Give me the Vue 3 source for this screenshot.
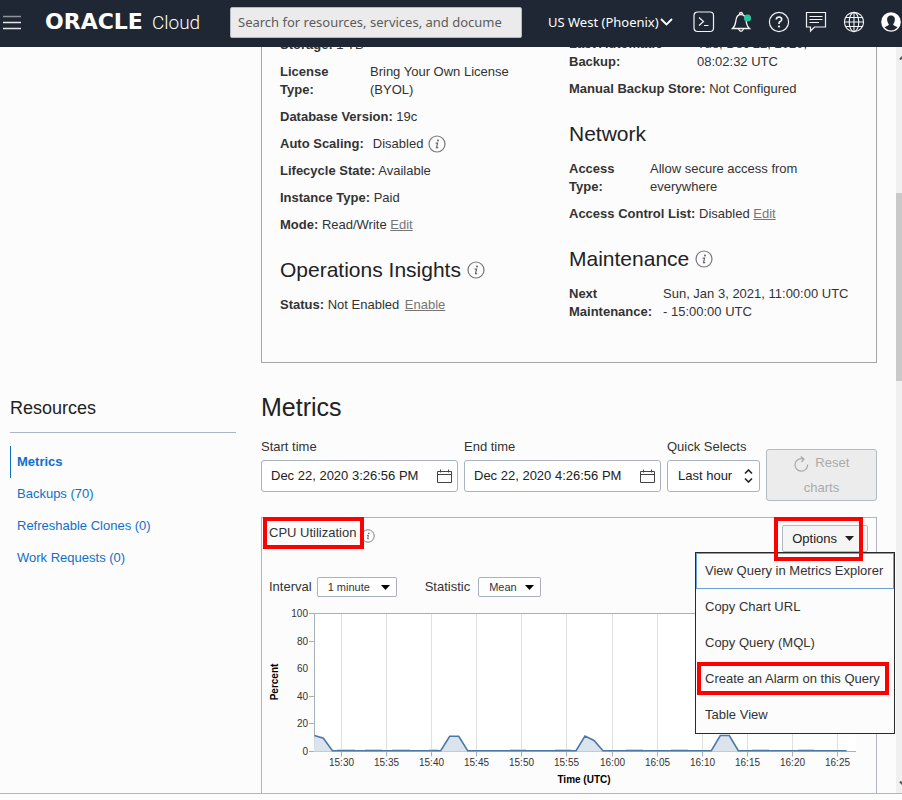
<script setup>
import { ref, h } from 'vue'

const startTime = ref('Dec 22, 2020 3:26:56 PM')
const endTime = ref('Dec 22, 2020 4:26:56 PM')
const quick = ref('Last hour')
const interval = ref('1 minute')
const statistic = ref('Mean')

const resources = ['Metrics', 'Backups (70)', 'Refreshable Clones (0)', 'Work Requests (0)']
const menuItems = [
  'View Query in Metrics Explorer',
  'Copy Chart URL',
  'Copy Query (MQL)',
  'Create an Alarm on this Query',
  'Table View',
]

const InfoIcon = () =>
  h('svg', { class: 'info', viewBox: '0 0 18 18', 'aria-hidden': 'true' }, [
    h('circle', { cx: 9, cy: 9, r: 8, fill: 'none', stroke: '#777', 'stroke-width': 1.2 }),
    h('circle', { cx: 10, cy: 5.6, r: 1, fill: '#666' }),
    h('path', { d: 'M7.6 8.2H9.6L8.5 12.6H10.2', fill: 'none', stroke: '#666', 'stroke-width': 1.2 }),
  ])

// Plot geometry, in chart units
const left = 52
const right = 594
const top = 13.5
const bottom = 151.5
const xAt = (minute) => left + 0.4 + minute * 9.02
const yAt = (value) => bottom - value * 1.38

const yTicks = [0, 20, 40, 60, 80, 100]
const xTicks = Array.from({ length: 12 }, (_, i) => {
  const total = 15 * 60 + 30 + i * 5
  return {
    x: Math.floor(xAt(3 + i * 5)) + 0.5,
    label: Math.floor(total / 60) + ':' + String(total % 60).padStart(2, '0'),
  }
})
const samples = [
  [0, 11.6], [1, 9.6], [2, 0.6], [14, 0.6], [15, 11], [16, 11], [17, 0.6], [29, 0.6],
  [30, 11.2], [31, 8], [32, 0.6], [44, 0.6], [45, 11.6], [46, 11.6], [47, 0.6], [59, 0.6],
]
const points = samples.map(([m, v]) => xAt(m).toFixed(1) + ',' + yAt(v).toFixed(1)).join(' ')
const area = `${left},${bottom} ${points} ${xAt(59)},${bottom}`
const ripples = [[75, 18], [103, 17], [130, 18], [167, 9], [248, 16], [293, 16], [364, 17], [409, 17], [490, 17], [536, 16]]
</script>

<template>
  <div class="page">
    <header class="topbar">
      <button class="icon-btn burger" type="button" aria-label="Navigation menu">
        <svg viewBox="0 0 18 15" width="18" height="15">
          <path d="M0 1.5H18" stroke="#8f959c" stroke-width="1.5" />
          <path d="M0 7.5H18M0 13.5H18" stroke="#e4e6e8" stroke-width="1.3" />
        </svg>
      </button>
      <a class="logo" href="#"><strong>ORACLE</strong><span>Cloud</span></a>
      <input class="search" type="text" aria-label="Search" placeholder="Search for resources, services, and docume" />
      <button class="region" type="button">
        US West (Phoenix)
        <svg viewBox="0 0 13 8" width="13" height="8"><path d="M1 1L6.500 6.500L12 1" fill="none" stroke="#fff" stroke-width="1.8" /></svg>
      </button>
      <nav class="tools" aria-label="Tools">
        <button class="icon-btn" type="button" aria-label="Cloud Shell">
          <svg viewBox="0 0 22 22" width="22" height="22" fill="none" stroke="#f2f3f4" stroke-width="1.2">
            <rect x="1" y="1" width="19.500" height="19.500" rx="3.500" />
            <path d="M6 6.500L10.500 10.500L6 14.500M11 14.500H15.500" />
          </svg>
        </button>
        <button class="icon-btn" type="button" aria-label="Announcements">
          <svg viewBox="0 0 22 22" width="22" height="22" fill="none" stroke="#f2f3f4" stroke-width="1.3">
            <path d="M2.500 17.500H19.500C16.500 15 16.500 12.500 16 9C15.500 5.500 13.500 3.500 11 3.500S6.500 5.500 6 9C5.500 12.500 5.500 15 2.500 17.500Z" />
            <path d="M9.500 3.500V2.500Q11 .5 12.500 2.500V3.500M8.500 18Q11 22.500 13.500 18" />
            <circle cx="17.500" cy="7" r="3.600" fill="#2bc4a0" stroke="none" />
          </svg>
        </button>
        <button class="icon-btn" type="button" aria-label="Help">
          <svg viewBox="0 0 22 22" width="22" height="22" fill="none" stroke="#f2f3f4" stroke-width="1.2">
            <circle cx="11" cy="11" r="9.600" />
            <path d="M8.300 8.500Q8.500 6 11 6Q13.800 6.200 13.700 8.500Q13.500 10 11.800 10.800Q11 11.300 11 13" stroke-width="1.700" />
            <circle cx="11" cy="15.500" r="1.100" fill="#fff" stroke="none" />
          </svg>
        </button>
        <button class="icon-btn" type="button" aria-label="Feedback">
          <svg viewBox="0 0 22 22" width="22" height="22" fill="none" stroke="#f2f3f4" stroke-width="1.200">
            <path d="M1.500 1.500H20.500V16H9.500L5.500 20V16H1.500Z" />
            <path d="M4.500 5.500H17.500M4.500 8.500H17.500M4.500 11.500H14" />
          </svg>
        </button>
        <button class="icon-btn" type="button" aria-label="Language">
          <svg viewBox="0 0 22 22" width="22" height="22" fill="none" stroke="#f2f3f4" stroke-width="1.100">
            <circle cx="11" cy="11" r="9.600" />
            <ellipse cx="11" cy="11" rx="4.800" ry="9.600" />
            <path d="M11 1.400V20.600M2.800 6.500H19.200M1.400 11H20.600M2.800 15.500H19.200" />
          </svg>
        </button>
        <button class="icon-btn" type="button" aria-label="Profile">
          <svg viewBox="0 0 22 22" width="22" height="22">
            <circle cx="11" cy="11" r="9.800" fill="#fff" />
            <path d="M11 4.500C7.800 4.500 6.800 7 7.200 9.500C7.500 11.500 8.200 12.500 9 13.300C8.500 15 6 15 4.500 16.500Q7.500 19.500 11 19.500T17.500 16.500C16 15 13.500 15 13 13.300C13.800 12.500 14.500 11.500 14.800 9.500C15.200 7 14.200 4.500 11 4.500Z" fill="#1e2733" />
          </svg>
        </button>
      </nav>
    </header>

    <div class="viewport">
      <main class="content">
        <section class="details" aria-label="Database details">
          <div class="col first">
            <p><b>Storage:</b> 1 TB</p>
            <div class="pair narrow"><b>License Type:</b><span>Bring Your Own License (BYOL)</span></div>
            <p><b>Database Version:</b> 19c</p>
            <p class="inline"><b>Auto Scaling:</b><span class="spaced">Disabled</span><InfoIcon /></p>
            <p><b>Lifecycle State:</b> Available</p>
            <p><b>Instance Type:</b> Paid</p>
            <p><b>Mode:</b> Read/Write <a href="#">Edit</a></p>
            <h2>Operations Insights <InfoIcon /></h2>
            <p><b>Status:</b> Not Enabled <a class="gap" href="#">Enable</a></p>
          </div>
          <div class="col">
            <div class="pair wide"><b>Last Automatic Backup:</b><span>Tue, Dec 22, 2020, 08:02:32 UTC</span></div>
            <p><b>Manual Backup Store:</b> Not Configured</p>
            <h2>Network</h2>
            <div class="pair slim"><b>Access Type:</b><span>Allow secure access from everywhere</span></div>
            <p><b>Access Control List:</b> Disabled <a href="#">Edit</a></p>
            <h2>Maintenance <InfoIcon /></h2>
            <div class="pair mid"><b>Next Maintenance:</b><span>Sun, Jan 3, 2021, 11:00:00 UTC - 15:00:00 UTC</span></div>
          </div>
        </section>

        <aside class="resources">
          <h2>Resources</h2>
          <nav aria-label="Resources">
            <a v-for="(item, i) in resources" :key="item" href="#" :class="{ active: i === 0 }">{{ item }}</a>
          </nav>
        </aside>

        <section class="metrics">
          <h1>Metrics</h1>
          <div class="filters">
            <div class="field">
              <label for="start">Start time</label>
              <div class="box">
                <input id="start" v-model="startTime" type="text" />
                <svg viewBox="0 0 15 15" width="15" height="15" fill="none" stroke="#444"><path d="M.5 2.500H14.500V13.500H.5ZM.5 5.500H14.500M3.500 .5V3.500M11.500 .5V3.500" /></svg>
              </div>
            </div>
            <div class="field">
              <label for="end">End time</label>
              <div class="box">
                <input id="end" v-model="endTime" type="text" />
                <svg viewBox="0 0 15 15" width="15" height="15" fill="none" stroke="#444"><path d="M.5 2.500H14.500V13.500H.5ZM.5 5.500H14.500M3.500 .5V3.500M11.500 .5V3.500" /></svg>
              </div>
            </div>
            <div class="field">
              <label for="quick">Quick Selects</label>
              <div class="box quick">
                <select id="quick" v-model="quick"><option>Last hour</option></select>
                <svg viewBox="0 0 9 14" width="9" height="14" fill="none" stroke="#222" stroke-width="1.600"><path d="M1 4.500L4.500 1L8 4.500M1 9.500L4.500 13L8 9.500" /></svg>
              </div>
            </div>
            <button class="reset" type="button" disabled>
              <svg viewBox="0 0 15 16" width="15" height="16" fill="none" stroke="#aaa" stroke-width="1.200"><path d="M13.600 8.500A6.300 6.300 0 1 1 9.500 3M6.800 .6L10 3L7.500 6" /></svg>
              Reset charts
            </button>
          </div>

          <article class="chart-card">
            <div class="chart-head">
              <h3>CPU Utilization</h3>
              <InfoIcon />
              <div class="options">
                <button class="options-btn" type="button" aria-haspopup="menu" aria-expanded="true">
                  Options
                  <svg viewBox="0 0 9 5" width="9" height="5"><path d="M0 0H9L4.500 5Z" fill="#222" /></svg>
                </button>
                <div class="menu" role="menu">
                  <button
                    v-for="(item, i) in menuItems"
                    :key="item"
                    type="button"
                    role="menuitem"
                    :class="{ focused: i === 0, marked: i === 3 }"
                  >{{ item }}</button>
                </div>
                <div class="mark"></div>
              </div>
            </div>

            <div class="controls">
              <label for="interval">Interval</label>
              <div class="mini interval">
                <select id="interval" v-model="interval"><option>1 minute</option></select>
                <svg viewBox="0 0 9 5" width="9" height="5"><path d="M0 0H9L4.500 5Z" fill="#000" /></svg>
              </div>
              <label for="statistic">Statistic</label>
              <div class="mini">
                <select id="statistic" v-model="statistic"><option>Mean</option></select>
                <svg viewBox="0 0 9 5" width="9" height="5"><path d="M0 0H9L4.500 5Z" fill="#000" /></svg>
              </div>
            </div>

            <svg class="chart" viewBox="0 0 614 193" role="img" aria-label="CPU Utilization, percent over time">
              <rect :x="left" :y="top" :width="right - left" :height="bottom - top" fill="#fff" />
              <g v-for="t in xTicks" :key="t.label">
                <path :d="`M${t.x} ${top}V${bottom}`" stroke="#e0e0e0" />
                <path :d="`M${t.x} ${bottom}v5`" stroke="#a9b0ba" />
                <text :x="t.x" y="166" text-anchor="middle">{{ t.label }}</text>
              </g>
              <g v-for="v in yTicks" :key="v">
                <path v-if="v !== 60" :d="`M47 ${Math.floor(yAt(v)) + 0.5}h5`" stroke="#a9b0ba" />
                <text x="46" :y="yAt(v) + 3.5" text-anchor="end">{{ v }}</text>
              </g>
              <path :d="`M${right} ${top}H52.5V${bottom}H${right}`" fill="none" stroke="#a9b0ba" />
              <polygon :points="area" fill="#dbe3ed" />
              <rect v-for="r in ripples" :key="r[0]" :x="r[0]" y="149" :width="r[1]" height="1" fill="#c9d6e4" />
              <polyline :points="points" fill="none" stroke="#4a78a8" stroke-width="1.600" />
              <text class="axis" x="322" y="183" text-anchor="middle">Time (UTC)</text>
              <text class="axis" transform="translate(16 82) rotate(-90)" text-anchor="middle">Percent</text>
            </svg>
          </article>
        </section>
      </main>
      <div class="scrollbar" aria-hidden="true">
        <svg viewBox="0 0 6 6" width="6" height="6"><path d="M4 5.500L7 2.500" stroke="#555" stroke-width="2" /></svg>
        <div class="thumb"></div>
        <svg viewBox="0 0 6 6" width="6" height="6"><path d="M4 .5L7 3.500" stroke="#555" stroke-width="2" /></svg>
      </div>
    </div>
  </div>
</template>

<style>
body {
  background: #fcfcfc;
}
</style>

<style scoped>
.page {
  min-height: 100vh;
  overflow: hidden;
  box-sizing: border-box;
  background: #fcfcfc;
  color: #333;
  font: 13px/18px "Liberation Sans", Arial, sans-serif;
}
.page * {
  box-sizing: border-box;
}
button,
input,
select {
  font: inherit;
  color: inherit;
  margin: 0;
}
h1,
h2,
h3,
p {
  margin: 0;
  font-weight: 400;
}
svg {
  display: block;
  flex: none;
}

.topbar {
  position: relative;
  z-index: 2;
  display: flex;
  align-items: center;
  height: 47px;
  padding-left: 3px;
  padding-bottom: 3px;
  background: #1e2733;
  color: #fff;
  font-family: "Noto Sans", sans-serif;
}
.icon-btn {
  padding: 0;
  border: 0;
  background: none;
}
.logo {
  display: flex;
  align-items: baseline;
  gap: 9px;
  width: 185px;
  margin-left: 24px;
  color: #fff;
  text-decoration: none;
  line-height: 24px;
}
.logo strong {
  font: 700 22px/24px "DejaVu Sans", sans-serif;
}
.logo span {
  font: 300 19px/24px Roboto, sans-serif;
}
.search {
  flex: 1;
  min-width: 0;
  height: 31px;
  padding: 0 7px;
  border: 1px solid #b4bac2;
  border-radius: 2px;
  background: #ebebeb;
}
.search::placeholder {
  color: #5c5c5c;
  opacity: 1;
}
.region {
  display: flex;
  align-items: center;
  gap: 1px;
  width: 145px;
  margin-left: 26px;
  padding: 0;
  border: 0;
  background: none;
  white-space: nowrap;
}
.tools {
  display: flex;
  flex: none;
  justify-content: space-between;
  width: 209px;
}

.viewport {
  display: flex;
  border-bottom: 1px solid #b0b7c2;
}
.content {
  flex: 1;
  min-width: 0;
  display: grid;
  grid-template-columns: 226px minmax(0, 1fr);
  column-gap: 25px;
  margin-top: -32px;
  padding: 0 19px 0 10px;
}
.scrollbar {
  display: flex;
  flex-direction: column;
  width: 6px;
  padding: 7px 0 6px;
  background: #f0f0f0;
}
.scrollbar svg:last-child {
  margin-top: auto;
}
.thumb {
  height: 188px;
  margin-top: 133px;
  background: #c9c9c9;
}

.details {
  grid-column: 2;
  display: grid;
  grid-template-columns: 289px minmax(0, 1fr);
  padding: 19px 18px 41px;
  border: 1px solid #a6a6a6;
}
.col.first {
  padding-top: 1px;
}
.col > p,
.pair {
  margin-bottom: 9px;
}
.col h2 {
  display: flex;
  align-items: center;
  gap: 6px;
  margin: 22px 0 12px;
  color: #222;
  font-size: 21px;
  line-height: 28px;
}
.col > :last-child {
  margin-bottom: 0;
}
.col a {
  color: #767676;
}
.col .gap {
  margin-left: 2px;
}
.inline {
  display: flex;
  align-items: center;
}
.spaced {
  margin: 0 5px 0 9px;
}
.pair {
  display: grid;
  grid-template-columns: 90px minmax(0, 1fr);
}
.pair.narrow {
  padding-right: 40px;
}
.pair.narrow b {
  width: 70px;
}
.pair.wide {
  grid-template-columns: 128px 130px;
}
.pair.slim {
  grid-template-columns: 81px 170px;
}
.pair.slim b {
  width: 60px;
}
.pair.mid {
  grid-template-columns: 94px 187px;
}
.info {
  width: 18px;
  height: 18px;
}

.resources {
  padding-top: 33px;
}
.resources h2 {
  padding-bottom: 12px;
  border-bottom: 1px solid #aeb5c0;
  color: #222;
  font-size: 18px;
  line-height: 24px;
}
.resources nav {
  display: flex;
  flex-direction: column;
  padding-top: 13px;
}
.resources a {
  padding-left: 6px;
  border-left: 1px solid transparent;
  color: #0f70c9;
  line-height: 32px;
  text-decoration: none;
}
.resources .active {
  border-color: #0f70c9;
  font-weight: 700;
}

.metrics {
  padding-top: 29px;
}
.metrics h1 {
  margin-bottom: 16px;
  color: #222;
  font-size: 25px;
  line-height: 30px;
}
.filters {
  display: grid;
  grid-template-columns: 197fr 197fr 93fr 111fr;
  align-items: start;
  gap: 6px;
}
.field label {
  display: block;
  margin-bottom: 4px;
}
.box {
  display: flex;
  align-items: center;
  height: 32px;
  padding: 0 5px 0 9px;
  border: 1px solid #a9b2c0;
  border-radius: 3px;
  background: #fff;
  color: #222;
}
.box.quick {
  padding: 0 6px 0 10px;
}
.box input,
.box select,
.mini select {
  flex: 1;
  min-width: 0;
  width: 100%;
  padding: 0;
  border: 0;
  background: none;
  appearance: none;
}
.reset {
  height: 52px;
  margin-top: 11px;
  padding: 0 20px 2px;
  border: 1px solid #b4bac2;
  border-radius: 3px;
  background: #ececec;
  color: #aaa;
  line-height: 25px;
}
.reset svg {
  display: inline-block;
  margin-right: 3px;
  vertical-align: middle;
}

.chart-card {
  margin-top: 16px;
  border: 1px solid #aeb5c0;
  border-bottom: 0;
}
.chart-head {
  display: flex;
  align-items: flex-start;
  padding: 5px 8px 0 7px;
}
.chart-head h3 {
  position: relative;
  z-index: 1;
  padding-right: 2px;
  font-size: 13px;
  line-height: 20px;
  outline: 4px solid #fe0000;
  outline-offset: 2px;
}
.chart-head > .info {
  width: 14px;
  height: 14px;
  margin: 6px 0 0 3px;
}
.options {
  position: relative;
  margin: 2px 0 0 auto;
}
.options-btn {
  display: flex;
  align-items: center;
  gap: 8px;
  height: 27px;
  padding: 0 13px 0 9px;
  border: 1px solid #b4bac2;
  border-radius: 2px;
  background: #f5f5f5;
  color: #222;
}
.mark {
  position: absolute;
  z-index: 4;
  inset: -8px 5px -9px -8px;
  border: 4px solid #fe0000;
  pointer-events: none;
}
.menu {
  position: absolute;
  z-index: 3;
  top: 27px;
  right: -27px;
  width: 200px;
  border: 1px solid #2a2a2a;
  background: #fcfcfc;
}
.menu button {
  display: block;
  width: 100%;
  height: 36px;
  padding: 0 8px;
  border: 1px solid transparent;
  background: none;
  text-align: left;
  white-space: nowrap;
}
.menu .focused {
  border-color: #6a9fd8;
}
.menu .marked {
  position: relative;
}
.menu .marked::after {
  content: "";
  position: absolute;
  inset: 0 4px 1px 0;
  border: 4px solid #fe0000;
}

.controls {
  display: flex;
  align-items: center;
  margin-top: 25px;
  padding-left: 7px;
}
.mini {
  display: flex;
  align-items: center;
  width: 63px;
  height: 20px;
  margin-left: 8px;
  padding: 0 6px 0 10px;
  border: 1px solid #a9b2c0;
  border-radius: 2px;
  background: #fff;
  font-size: 11px;
}
.mini.interval {
  width: 80px;
  margin: 0 28px 0 5px;
}
.chart {
  width: 100%;
  height: auto;
  margin-top: 3px;
}
.chart text {
  fill: #333;
  font-size: 10px;
}
.chart .axis {
  fill: #000;
  font-weight: 700;
}
</style>
